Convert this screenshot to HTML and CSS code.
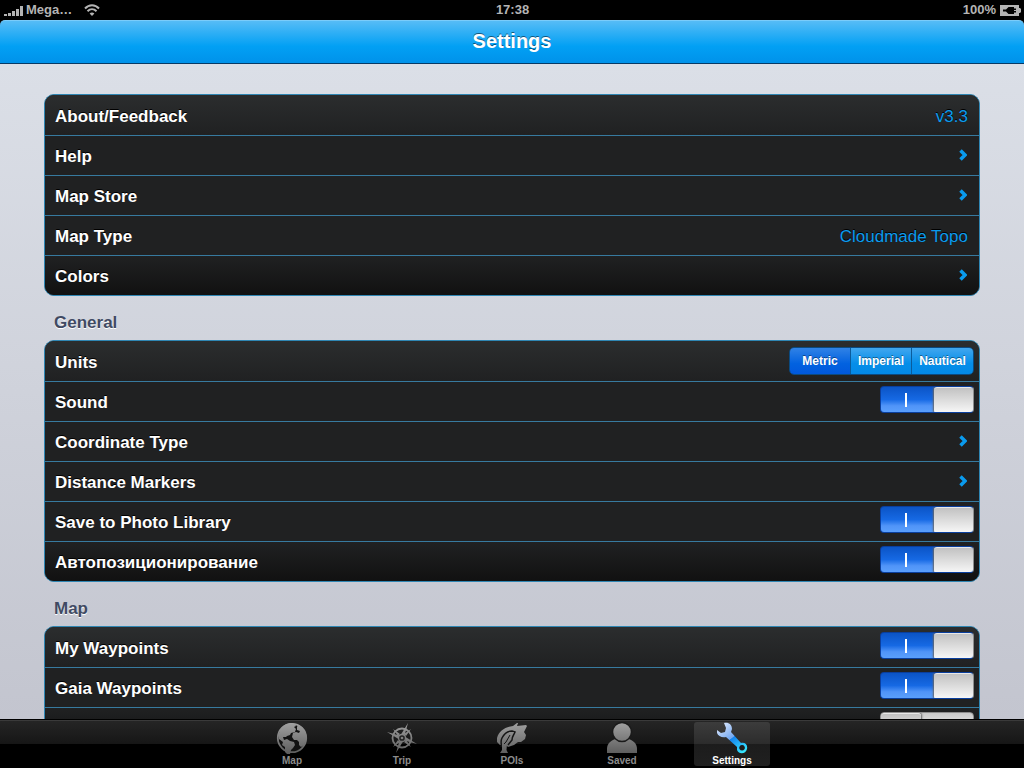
FILE: index.html
```html
<!DOCTYPE html>
<html lang="en">
<head>
  <meta charset="UTF-8" />
  <meta name="viewport" content="width=device-width, initial-scale=1.0"/>
  <title>Settings</title>
  <link rel="stylesheet" href="styles.css">
</head>
<body>
  <div class="status">
    <div class="status-left">
      <svg class="signal" width="20" height="12" viewBox="0 0 20 12">
        <path d="M0 10h3v2H0zM4 9h3v3H4zM8 7h3v5H8zM12 5h3v7h-3zM16 2h3v10h-3z" fill="#b4b4b4"/>
      </svg>
      <span>Mega…</span>
      <svg class="wifi" width="16" height="12" viewBox="0 0 16 12">
        <g fill="none" stroke="#b4b4b4" stroke-width="2">
          <path d="M1 4.500C5 .2 11 .2 15 4.500"/>
          <path d="M3.500 7.300c2.600-2.600 6.400-2.600 9 0"/>
        </g>
        <path d="M8 12L5.600 9.400c1.400-1.200 3.400-1.200 4.800 0z" fill="#b4b4b4"/>
      </svg>
    </div>
    <div class="clock">17:38</div>
    <div class="status-right">
      <span>100%</span>
      <svg width="21" height="11" viewBox="0 0 21 11">
        <path d="M0 0h19v3h1l1 1v3l-1 1h-1v3H0z" fill="#b4b4b4"/>
        <path d="M3 4.500h3L8.500 2H14v1.500h2V5h-2v1h2v1.500h-2V9H8.500L6 6.500H3z" fill="#000"/>
      </svg>
    </div>
  </div>

  <header>
    <h1>Settings</h1>
  </header>

  <main>
    <ul class="group">
      <li class="row"><span>About/Feedback</span><span class="value">v3.3</span></li>
      <li class="row"><a href="#help">Help <svg class="arrow" viewBox="0 0 8 12"><path d="M1.500 1.500L6 6l-4.500 4.500"/></svg></a></li>
      <li class="row"><a href="#store">Map Store <svg class="arrow" viewBox="0 0 8 12"><path d="M1.500 1.500L6 6l-4.500 4.500"/></svg></a></li>
      <li class="row"><span>Map Type</span><span class="value">Cloudmade Topo</span></li>
      <li class="row"><a href="#colors">Colors <svg class="arrow" viewBox="0 0 8 12"><path d="M1.500 1.500L6 6l-4.500 4.500"/></svg></a></li>
    </ul>

    <h2>General</h2>
    <ul class="group">
      <li class="row">
        <span id="units">Units</span>
        <div class="segments" role="radiogroup" aria-labelledby="units">
          <input type="radio" name="units" id="metric" checked><label for="metric">Metric</label>
          <input type="radio" name="units" id="imperial"><label for="imperial">Imperial</label>
          <input type="radio" name="units" id="nautical"><label for="nautical">Nautical</label>
        </div>
      </li>
      <li class="row"><label for="sound">Sound</label><input type="checkbox" class="switch" id="sound" checked></li>
      <li class="row"><a href="#coords">Coordinate Type <svg class="arrow" viewBox="0 0 8 12"><path d="M1.500 1.500L6 6l-4.500 4.500"/></svg></a></li>
      <li class="row"><a href="#markers">Distance Markers <svg class="arrow" viewBox="0 0 8 12"><path d="M1.500 1.500L6 6l-4.500 4.500"/></svg></a></li>
      <li class="row"><label for="photo">Save to Photo Library</label><input type="checkbox" class="switch" id="photo" checked></li>
      <li class="row"><label for="auto">Автопозиционирование</label><input type="checkbox" class="switch" id="auto" checked></li>
    </ul>

    <h2>Map</h2>
    <ul class="group">
      <li class="row"><label for="my">My Waypoints</label><input type="checkbox" class="switch" id="my" checked></li>
      <li class="row"><label for="gaia">Gaia Waypoints</label><input type="checkbox" class="switch" id="gaia" checked></li>
      <li class="row"><span></span><input type="checkbox" class="switch" aria-label="Map option"></li>
    </ul>
  </main>

  <nav>
    <a class="tab" href="#map">
      <svg width="32" height="32" viewBox="0 0 32 32">
        <defs>
          <linearGradient id="grey" gradientUnits="userSpaceOnUse" x1="0" y1="0" x2="0" y2="32">
            <stop offset="0" stop-color="#a2a2a2"/><stop offset="1" stop-color="#5c5c5c"/>
          </linearGradient>
        </defs>
        <circle cx="16" cy="16" r="14.200" fill="#111" stroke="url(#grey)" stroke-width="1.800"/>
        <path fill="url(#grey)" d="M4 8C7 3 11 1 16 1l3 1 1 2-2 1 2 2-1 3-4 1-1 2-3 1-1 1-3 0 1 3 3-1 3 2 4 1 1 3-2 3-2 2-1 4h-3l-2-2 0-5-3-2 1-3-4-3-1-5 2-2-1-2zM22 3c5 2 8 6 8.500 11l-.5 4-2 5-3 2-2-2 0-3-2-2-3 0-2-3 1-4 3-1 3 1 1-2-3-1 0-3z"/>
      </svg>
      <span>Map</span>
    </a>
    <a class="tab" href="#trip">
      <svg width="32" height="32" viewBox="0 0 32 32">
        <circle cx="16" cy="16" r="9.500" fill="none" stroke="url(#grey)" stroke-width="1.800"/>
        <g fill="url(#grey)">
          <path d="M22 1l-3.500 12.500L16 16l-1-3.500zM31 22l-12.500-3.500L16 16l3.500-1zM10 31l3.500-12.500L16 16l1 3.500zM1 10l12.500 3.500L16 16l-3.500 1z"/>
          <path d="M7 7l7 5-2 2zM25 7l-5 7-2-2zM25 25l-7-5 2-2zM7 25l5-7 2 2z"/>
        </g>
        <circle cx="16" cy="16" r="3.500" fill="#222" stroke="url(#grey)" stroke-width="1.300"/>
        <circle cx="16" cy="16" r="1.300" fill="url(#grey)"/>
      </svg>
      <span>Trip</span>
    </a>
    <a class="tab" href="#pois">
      <svg width="32" height="32" viewBox="0 0 32 32">
        <path fill="url(#grey)" d="M4 23L1 20v-4C3 9 9 5 17 4l4-3 1 0-1 3 9-1 1 1-3 6 2 3-1 4-4 3-3 0-4 3-6 2-2-2-3 0z"/>
        <path fill="none" stroke="#151515" stroke-width="1.500" d="M5 25c1-3-1-5 1-9 2-4 5-7 10-7l3 1c-1 3-3 4-3 8l-4 5"/>
        <path fill="url(#grey)" d="M4 31l2-3v-9c2-4 5-8 9-9l3 0-3 4-1 4-3 4-.5 6 1.500 3z"/>
        <path fill="none" stroke="#151515" d="M8 22l2-2 4-7"/>
      </svg>
      <span>POIs</span>
    </a>
    <a class="tab" href="#saved">
      <svg width="32" height="32" viewBox="0 0 32 32">
        <path fill="url(#grey)" d="M1 31v-4c0-6 4-8 8-10h14c4 2 8 4 8 10v4z"/>
        <circle cx="16" cy="10" r="9.500" fill="url(#grey)" stroke="#1a1a1a" stroke-width="1.500"/>
      </svg>
      <span>Saved</span>
    </a>
    <a class="tab active" href="#settings">
      <svg width="32" height="32" viewBox="0 0 32 32">
        <defs>
          <linearGradient id="blue" gradientUnits="userSpaceOnUse" x1="6" y1="2" x2="27" y2="30">
            <stop offset="0" stop-color="#d4e2fa"/><stop offset=".48" stop-color="#74a8f0"/>
            <stop offset=".5" stop-color="#1684ee"/><stop offset="1" stop-color="#35e4ff"/>
          </linearGradient>
        </defs>
        <path fill="url(#blue)" fill-rule="evenodd" d="M8 1c5-1 8 2 8 6l-1 3 10 11c4-1 7 2 6 6-1 5-8 6-10 1v-3L10 15c-4 1-8-1-9-4V8l4 3 4-1 1-4zM26 23a2.800 2.800 0 1 0 .1 0z"/>
      </svg>
      <span>Settings</span>
    </a>
  </nav>
</body>
</html>
```
FILE: styles.css
```css
* {
  margin: 0;
  padding: 0;
  box-sizing: border-box;
}

body {
  height: 100vh;
  display: flex;
  flex-direction: column;
  overflow: hidden;
  background-color: black;
  color: white;
  font-family: "Liberation Sans", Arial, Helvetica, sans-serif;
}

a {
  color: inherit;
  text-decoration: none;
}

/* status bar */
.status {
  height: 20px;
  flex: none;
  display: grid;
  grid-template-columns: 1fr auto 1fr;
  align-items: center;
  padding: 0 3px 0 4px;
  font-size: 13px;
  font-weight: bold;
  line-height: 18px;
  color: #b4b4b4;
}

.status-left,
.status-right {
  display: flex;
  align-items: center;
}

.status-left {
  gap: 2px;
}

.status-right {
  justify-content: flex-end;
  gap: 4px;
}

.wifi {
  margin-left: 10px;
}

/* title bar */
header {
  height: 44px;
  flex: none;
  border-top: 1px solid #7accfa;
  border-bottom: 1px solid #063a66;
  border-radius: 5px 5px 0 0;
  background: linear-gradient(#56bcf6, #02a0f4 60%, #0092ea);
}

h1 {
  font-size: 20px;
  line-height: 40px;
  text-align: center;
  text-shadow: 0 -1px 0 rgba(0, 0, 0, 0.5);
}

/* settings list */
main {
  flex: 1;
  min-height: 0;
  overflow-y: auto;
  scrollbar-width: none;
  padding: 30px 44px;
  background: linear-gradient(#dbdfe7, #c3c5cf);
}

h2 {
  padding: 0 10px;
  margin: 17px 0 7px;
  font-size: 17px;
  line-height: 20px;
  color: #404a63;
  text-shadow: 0 1px 0 white;
}

.group {
  list-style: none;
  border: 1px solid #2f86b3;
  border-radius: 10px;
  overflow: hidden;
  background-color: #202122;
}

.row {
  height: 40px;
  display: flex;
  align-items: center;
  justify-content: space-between;
  padding: 2px 5px 0 10px;
  border-bottom: 1px solid #377a9f;
  font-size: 17px;
  font-weight: bold;
  line-height: 20px;
  text-shadow: 0 -1px 0 black;
}

.row:first-child {
  height: 41px;
  padding-top: 3px;
  background: linear-gradient(#2b2d2e, #202122);
}

.row:last-child {
  height: 39px;
  border-bottom: none;
  background: linear-gradient(#202122, #111);
}

.row a {
  flex: 1;
  display: flex;
  align-items: center;
  justify-content: space-between;
}

.value {
  padding-right: 6px;
  font-weight: normal;
  color: #0a9bee;
}

.arrow {
  width: 8px;
  height: 12px;
  margin: 0 7px 4px 0;
  fill: none;
  stroke: #0a9bee;
  stroke-width: 3.5;
}

/* on/off switch */
.switch {
  appearance: none;
  width: 94px;
  height: 27px;
  margin-bottom: 6px;
  border: 1px solid #8d8d8d;
  border-radius: 4px;
  overflow: hidden;
  background: linear-gradient(#c9c9c9, #fff);
}

.switch::before {
  content: "";
  display: block;
  width: 40px;
  height: 25px;
  border-radius: 3px;
  border-top: 1px solid #e8e8e8;
  background: linear-gradient(#c2c2c2, #f8f8f8);
  box-shadow: 0 0 2px 1px #666;
}

.switch:checked {
  border-color: #0a3f9e;
  border-right-color: #8d8d8d;
  background: linear-gradient(white, white) 24px 6px / 2px 14px no-repeat,
    linear-gradient(#0b54c6, #1669e4 50%, #5094f8 75%, #5a9ffc);
}

.switch:checked::before {
  margin-left: 53px;
}

/* units picker */
.segments {
  display: flex;
  margin-bottom: 3px;
  border: 1px solid #0b4a80;
  border-radius: 5px;
  overflow: hidden;
}

.segments input {
  appearance: none;
}

.segments label {
  width: 61px;
  border-right: 1px solid #0a5c9c;
  background: linear-gradient(#41a7ef, #058ee9 60%, #0489e6);
  font-size: 12px;
  line-height: 26px;
  text-align: center;
  text-shadow: 0 -1px 0 rgba(0, 0, 0, 0.4);
}

.segments label:last-child {
  border-right: none;
}

.segments input:checked + label {
  background: linear-gradient(#3082e6, #0262e0 60%, #0158dc);
}

/* bottom tabs */
nav {
  height: 49px;
  flex: none;
  display: flex;
  justify-content: center;
  gap: 34px;
  padding-top: 2px;
  border-top: 1px solid black;
  background: linear-gradient(#3a3a3a 1px, #252525 1px, #161616 24px, black 24px);
}

.tab {
  width: 76px;
  height: 44px;
  display: flex;
  flex-direction: column;
  align-items: center;
  border-radius: 3px;
  font-size: 10px;
  font-weight: bold;
  line-height: 14px;
  color: #8c8c8c;
}

.tab svg {
  flex: none;
}

.tab.active {
  color: white;
  background: linear-gradient(#3c3c3c, #2c2c2c 22px, #1c1c1c 22px, #202020);
}
```
